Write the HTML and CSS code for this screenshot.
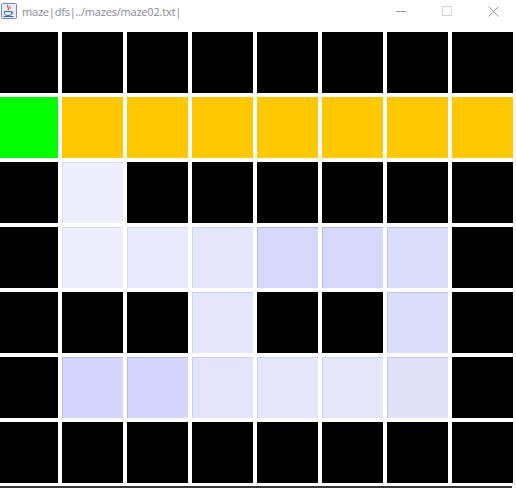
FILE: index.html
```html
<!DOCTYPE html>
<html>
<head>
<meta charset="utf-8">
<link rel="stylesheet" href="styles.css">
</head>
<body>
<div class="window">
  <div class="titlebar">
    <svg class="appicon" width="16" height="16" viewBox="0 0 16 16">
      <rect x="0.5" y="0.5" width="15" height="15" rx="1" fill="#e8eef8" stroke="#6b86b8"/>
      <path d="M7 2 C5 4 9 5 7 7" stroke="#e0482a" stroke-width="1.2" fill="none"/>
      <path d="M9 3 C8 4 10 5 9 6" stroke="#e0482a" stroke-width="1" fill="none"/>
      <path d="M3.5 8.5 H10.5 V10.5 C10.5 12 9 12.5 7 12.5 C5 12.5 3.5 12 3.5 10.5 Z" fill="none" stroke="#3a66b0" stroke-width="1"/>
      <path d="M10.5 9 C12.5 9 12.5 11 10.3 11" fill="none" stroke="#3a66b0" stroke-width="0.9"/>
      <path d="M2.5 13.5 H12.5" stroke="#3a66b0" stroke-width="1"/>
    </svg>
    <span class="title">maze|dfs|../mazes/maze02.txt|</span>
    <div class="controls">
      <span class="ctl"><svg width="10" height="10" viewBox="0 0 10 10"><path d="M0 5.5 H10" stroke="#999" stroke-width="1"/></svg></span>
      <span class="ctl"><svg width="10" height="10" viewBox="0 0 10 10"><rect x="0.5" y="0.5" width="9" height="9" fill="none" stroke="#d4d4d4"/></svg></span>
      <span class="ctl"><svg width="11" height="11" viewBox="0 0 11 11"><path d="M0.5 0.5 L10.5 10.5 M10.5 0.5 L0.5 10.5" stroke="#999" stroke-width="1"/></svg></span>
    </div>
  </div>
  <div class="grid">
    <div class="c w"></div><div class="c w"></div><div class="c w"></div><div class="c w"></div><div class="c w"></div><div class="c w"></div><div class="c w"></div><div class="c w"></div>
    <div class="c s"></div><div class="c p"></div><div class="c p"></div><div class="c p"></div><div class="c p"></div><div class="c p"></div><div class="c p"></div><div class="c p"></div>
    <div class="c w"></div><div class="c v v1"></div><div class="c w"></div><div class="c w"></div><div class="c w"></div><div class="c w"></div><div class="c w"></div><div class="c w"></div>
    <div class="c w"></div><div class="c v v1"></div><div class="c v v2"></div><div class="c v v3"></div><div class="c v v4"></div><div class="c v v4"></div><div class="c v v5"></div><div class="c w"></div>
    <div class="c w"></div><div class="c w"></div><div class="c w"></div><div class="c v v3"></div><div class="c w"></div><div class="c w"></div><div class="c v v5"></div><div class="c w"></div>
    <div class="c w"></div><div class="c v v6"></div><div class="c v v6"></div><div class="c v v7"></div><div class="c v v3"></div><div class="c v v3"></div><div class="c v v8"></div><div class="c w"></div>
    <div class="c w"></div><div class="c w"></div><div class="c w"></div><div class="c w"></div><div class="c w"></div><div class="c w"></div><div class="c w"></div><div class="c w"></div>
  </div>
  <div class="bottomline"></div>
</div>
</body>
</html>
```
FILE: styles.css
```css
html, body {
  margin: 0;
  padding: 0;
  background: #ffffff;
  overflow: hidden;
}
.window {
  width: 516px;
  height: 488px;
  position: relative;
  overflow: hidden;
  background: #ffffff;
}
.titlebar {
  height: 32px;
  display: flex;
  align-items: flex-start;
  box-sizing: border-box;
}
.appicon {
  margin: 3px 0 0 1px;
  flex: none;
}
.title {
  margin: 2px 0 0 5px;
  font-family: "Open Sans", "Noto Sans", sans-serif;
  font-size: 11px;
  line-height: 20px;
  letter-spacing: -0.2px;
  color: #8a8796;
}
.controls {
  margin-left: auto;
  display: flex;
  margin-top: 6px;
}
.ctl {
  width: 46px;
  display: flex;
  justify-content: center;
  height: 12px;
  align-items: flex-start;
}
.grid {
  display: grid;
  grid-template-columns: repeat(8, 61px);
  grid-auto-rows: 61px;
  gap: 4px;
  margin-left: -3px;
}
.c { box-sizing: border-box; }
.w { background: #000000; }
.s { background: #00ff00; }
.p { background: #ffc800; }
.v {
  border-top: 1px solid #c9c9ef;
  border-left: 1px solid #c9c9ef;
}
.v1 { background: #eeeeff; border-color: #dcdcf6; }
.v2 { background: #eaeafd; border-color: #d8d8f5; }
.v3 { background: #e6e6fb; border-color: #d2d2f4; }
.v4 { background: #d8d8fd; border-color: #b8b8ee; }
.v5 { background: #dcdcfb; border-color: #c2c2f0; }
.v6 { background: #d5d5fd; border-color: #b8b8ee; }
.v7 { background: #e3e3fb; border-color: #cfcff3; }
.v8 { background: #e0e0fb; border-color: #c8c8f1; }
.bottomline {
  position: absolute;
  left: 0;
  bottom: 0;
  width: 512px;
  height: 2px;
  background: #3a3a3a;
}
```
